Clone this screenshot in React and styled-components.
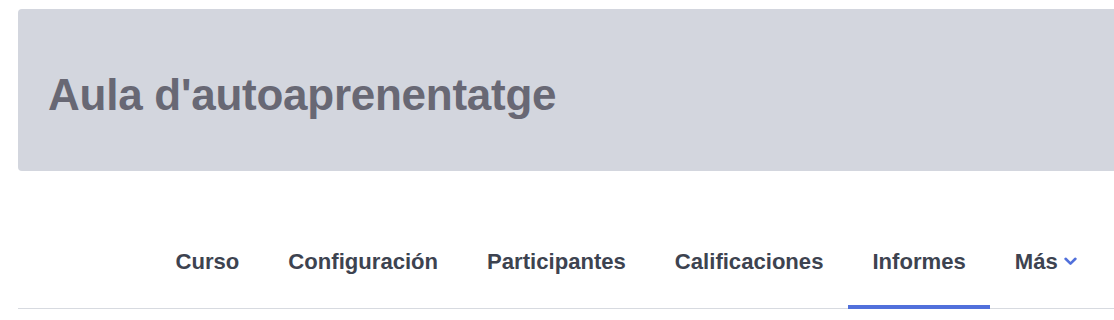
import React from 'react';
import styled, { createGlobalStyle } from 'styled-components';

const GlobalStyle = createGlobalStyle`
  html, body {
    margin: 0;
    padding: 0;
    background: #ffffff;
    overflow: hidden;
  }
  body {
    font-family: "Liberation Sans", Arial, sans-serif;
  }
`;

const Page = styled.div`
  padding-top: 9px;
  margin-left: 18px;
  margin-right: -20px;
`;

const CourseHeader = styled.header`
  background: #d3d6de;
  border-radius: 4px;
  padding: 60px 30px 49px;
`;

const CourseTitle = styled.h1`
  margin: 0;
  font-size: 44px;
  line-height: 1.2;
  font-weight: 700;
  letter-spacing: -0.25px;
  color: #686874;
`;

const SecondaryNav = styled.nav`
  margin-top: 47px;
  border-bottom: 1px solid #d7dae0;
`;

const NavList = styled.ul`
  list-style: none;
  margin: 0;
  padding: 0 0 0 133px;
  display: flex;
  align-items: flex-end;
`;

const NavItem = styled.li`
  margin-bottom: -1px;
  padding: 27px 24.5px 27px;
  font-size: 22.1px;
  line-height: 1.5;
  font-weight: 700;
  color: #3d4350;
  white-space: nowrap;
  border-bottom: 4px solid ${(p) => (p.$active ? '#5170db' : 'transparent')};
  display: flex;
  align-items: center;
  gap: 6px;
  cursor: pointer;
`;

const Chevron = () => (
  <svg width="13" height="9" viewBox="0 0 13 9" aria-hidden="true">
    <polyline
      points="1.6,1.8 6.5,6.6 11.4,1.8"
      fill="none"
      stroke="#5170db"
      strokeWidth="2.6"
      strokeLinecap="round"
      strokeLinejoin="round"
    />
  </svg>
);

const tabs = ['Curso', 'Configuración', 'Participantes', 'Calificaciones', 'Informes'];

export default function App() {
  return (
    <>
      <GlobalStyle />
      <Page>
        <CourseHeader>
          <CourseTitle>Aula d'autoaprenentatge</CourseTitle>
        </CourseHeader>
        <SecondaryNav>
          <NavList>
            {tabs.map((t) => (
              <NavItem key={t} $active={t === 'Informes'}>
                {t}
              </NavItem>
            ))}
            <NavItem>
              Más
              <Chevron />
            </NavItem>
          </NavList>
        </SecondaryNav>
      </Page>
    </>
  );
}
